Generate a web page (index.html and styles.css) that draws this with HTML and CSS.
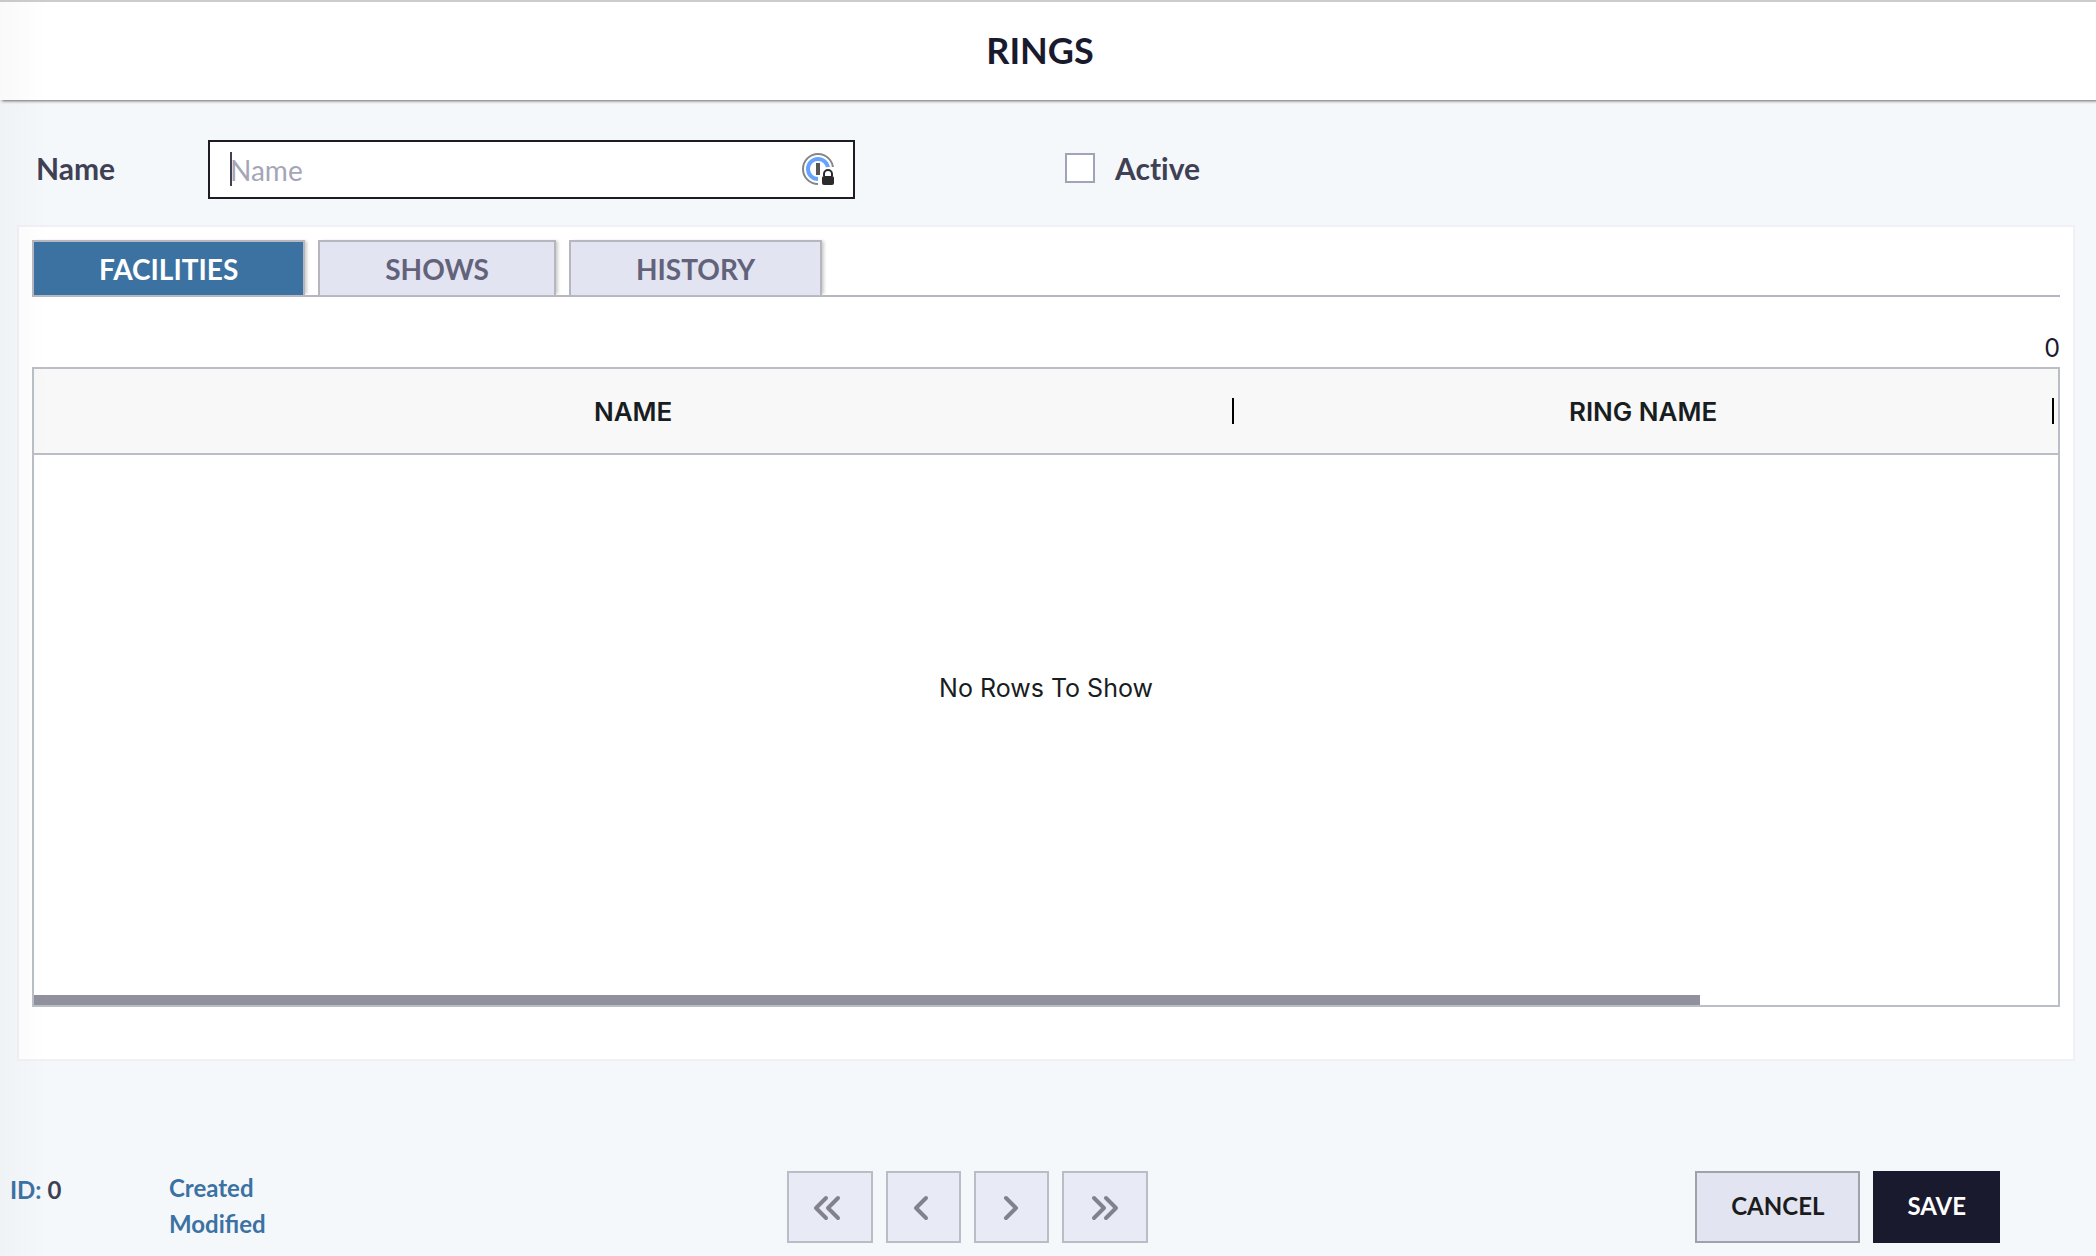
FILE: index.html
```html
<!DOCTYPE html>
<html lang="en">
<head>
<meta charset="utf-8">
<meta name="viewport" content="width=device-width, initial-scale=1">
<title>Rings</title>
<link rel="stylesheet" href="styles.css">
</head>
<body>
<div class="page">
  <header class="page-header">
    <h1 class="page-title">RINGS</h1>
  </header>

  <form class="ring-form">
    <label class="field-label" for="ring-name">Name</label>
    <div class="text-field">
      <input class="text-input" id="ring-name" type="text" placeholder="Name">
      <span class="caret"></span>
      <svg class="vault-icon" width="34" height="34" viewBox="0 0 34 34" aria-hidden="true">
        <circle cx="16" cy="17" r="15" fill="none" stroke="#858585" stroke-width="2"/>
        <circle cx="16" cy="17" r="10" fill="none" stroke="#66a3ff" stroke-width="4"/>
        <path d="M14 11h4v12h-4z" fill="#555"/>
        <path d="M16 23h3c0-5 3-8 7-8h8v19H16z" fill="#fff"/>
        <path d="M22 24v-2a4 4 0 0 1 8 0v2" fill="none" stroke="#2b2b2b" stroke-width="2"/>
        <rect x="20" y="24" width="12" height="9" rx="2" fill="#2b2b2b"/>
      </svg>
    </div>
    <div class="check-field">
      <input class="check-input" id="ring-active" type="checkbox">
      <label class="field-label" for="ring-active">Active</label>
    </div>
  </form>

  <main class="card">
    <div class="tabs" role="tablist">
      <button class="tab tab-active" type="button" role="tab" aria-selected="true">FACILITIES</button>
      <button class="tab" type="button" role="tab" aria-selected="false">SHOWS</button>
      <button class="tab" type="button" role="tab" aria-selected="false">HISTORY</button>
    </div>
    <div class="row-count">0</div>
    <div class="grid-box">
      <table class="grid-table">
        <thead>
          <tr>
            <th class="col-name"><span class="col-head">NAME</span></th>
            <th class="col-ring"><span class="col-head">RING NAME</span></th>
            <td class="col-rest"></td>
          </tr>
        </thead>
      </table>
      <div class="grid-empty">No Rows To Show</div>
      <div class="grid-scroll"><div class="grid-thumb"></div></div>
    </div>
  </main>

  <footer class="page-footer">
    <div class="record-info">
      <div class="record-id"><span class="info-label">ID:</span> 0</div>
      <div class="record-dates">
        <div class="info-label">Created</div>
        <div class="info-label">Modified</div>
      </div>
    </div>
    <nav class="pager" aria-label="Records">
      <button class="pager-button pager-wide pager-back" type="button" aria-label="First">
        <svg width="28" height="26" viewBox="0 0 28 26"><path d="M13 3 3 13l10 10M25 3 15 13l10 10"/></svg>
      </button>
      <button class="pager-button pager-back" type="button" aria-label="Previous">
        <svg width="16" height="26" viewBox="0 0 16 26"><path d="M13 3 3 13l10 10"/></svg>
      </button>
      <button class="pager-button" type="button" aria-label="Next">
        <svg width="16" height="26" viewBox="0 0 16 26"><path d="M3 3l10 10L3 23"/></svg>
      </button>
      <button class="pager-button pager-wide" type="button" aria-label="Last">
        <svg width="28" height="26" viewBox="0 0 28 26"><path d="M3 3l10 10L3 23M15 3l10 10-10 10"/></svg>
      </button>
    </nav>
    <div class="actions">
      <button class="action action-cancel" type="button">CANCEL</button>
      <button class="action action-save" type="button">SAVE</button>
    </div>
  </footer>
</div>
</body>
</html>
```
FILE: styles.css
```css
* {
  box-sizing: border-box;
}

body {
  margin: 0;
  background: #f4f8fb;
  color: #404055;
  font-family: Lato, "Liberation Sans", sans-serif;
}

button,
input {
  margin: 0;
  font-family: inherit;
}

.page {
  position: relative;
  display: flex;
  flex-direction: column;
  min-height: 100vh;
}

/* soft shade along the left edge of the drawer */
.page::after {
  content: "";
  position: absolute;
  inset: 0 auto 0 0;
  width: 48px;
  background: linear-gradient(to right, rgba(60, 0, 30, 0.025), rgba(60, 0, 30, 0));
  pointer-events: none;
}

.page-header {
  display: flex;
  align-items: center;
  justify-content: center;
  height: 100px;
  padding: 0 16px 2px 0;
  border-top: 2px solid #ccc;
  background: #fff;
  box-shadow: 2px 1px 3px #666;
}

.page-title {
  margin: 0;
  color: #1a1a2e;
  font-size: 36px;
  line-height: 44px;
  font-weight: 700;
}

.ring-form {
  display: grid;
  grid-template-columns: 172px 647fr 1241fr;
  align-items: center;
  padding: 40px 0 26px 36px;
}

.field-label {
  padding-bottom: 3px;
  color: #404055;
  font-size: 30px;
  line-height: 36px;
  font-weight: 700;
  font-variant-ligatures: none;
}

.text-field {
  position: relative;
}

.text-input {
  display: block;
  width: 100%;
  height: 59px;
  padding: 0 64px 0 20px;
  border: 2px solid #1c1c22;
  border-radius: 0;
  background: #fff;
  color: #404055;
  font-size: 28px;
  outline: none;
}

.text-input::placeholder {
  color: #a5a5b8;
  opacity: 1;
}

.caret {
  position: absolute;
  top: 12px;
  left: 22px;
  width: 2px;
  height: 34px;
  background: #404055;
}

.vault-icon {
  position: absolute;
  top: 12px;
  right: 19px;
}

.check-field {
  display: flex;
  align-items: center;
  gap: 20px;
  padding-left: 210px;
}

.check-input {
  width: 30px;
  height: 30px;
  margin-bottom: 3px;
  border: 2px solid #a3a3b8;
  background: #fff;
  appearance: none;
}

.card {
  flex: 1;
  display: flex;
  flex-direction: column;
  margin: 0 21px 0 17px;
  padding: 13px 13px 52px;
  border: 2px solid #f0f1f6;
  background: #fff;
}

.tabs {
  display: flex;
  gap: 13px;
  border-bottom: 2px solid #b6b6be;
}

.tab {
  height: 55px;
  padding: 0 65px;
  border: 2px solid #b6b6be;
  border-bottom: 0;
  background: #e2e4f1;
  box-shadow: 3px 0 3px -1px #ccc;
  color: #62627a;
  font-size: 28px;
  font-weight: 700;
}

.tab-active {
  background: #3c72a2;
  color: #fff;
}

.row-count {
  padding: 35px 0 3px;
  color: #1a1a2e;
  font-family: Inter, sans-serif;
  font-size: 25px;
  line-height: 32px;
  text-align: right;
}

.grid-box {
  position: relative;
  flex: 1;
  display: flex;
  flex-direction: column;
  border: 2px solid #babfc7;
  color: #181d1f;
  font-family: Inter, sans-serif;
}

.grid-table {
  width: 100%;
  border-collapse: separate;
  border-spacing: 0;
  table-layout: fixed;
  background: #f8f8f8;
}

.grid-table th,
.grid-table td {
  height: 86px;
  padding: 0;
  border-bottom: 2px solid #babfc7;
}

.col-name {
  width: 59.3%;
}

.col-ring {
  width: 40.5%;
}

.col-head {
  display: block;
  height: 26px;
  border-right: 2px solid #000;
  font-size: 26px;
  line-height: 28px;
  font-weight: 600;
}

.grid-empty {
  position: absolute;
  inset: 0;
  display: flex;
  align-items: center;
  justify-content: center;
  padding-top: 2px;
  font-size: 25px;
}

.grid-scroll {
  margin-top: auto;
}

.grid-thumb {
  width: 82.3%;
  height: 10px;
  background: #91919e;
}

.page-footer {
  display: grid;
  grid-template-columns: 776fr auto 851fr;
  align-items: center;
  padding: 109px 96px 12px 10px;
}

.record-info {
  display: flex;
  padding-bottom: 2px;
  font-size: 24px;
  line-height: 36px;
  font-weight: 700;
}

.record-id {
  width: 159px;
  line-height: 40px;
}

.info-label {
  color: #3c72a2;
}

.pager {
  display: flex;
  gap: 13px;
}

.pager-button {
  display: flex;
  align-items: center;
  justify-content: center;
  width: 75px;
  height: 72px;
  padding: 2px 0 0;
  border: 2px solid #babdc6;
  background: #e8ebf5;
}

.pager-wide {
  width: 86px;
}

.pager-back {
  padding-right: 5px;
}

.pager-button path {
  fill: none;
  stroke: #82828f;
  stroke-width: 4;
  stroke-linecap: round;
  stroke-linejoin: round;
}

.actions {
  display: flex;
  justify-content: flex-end;
  gap: 13px;
}

.action {
  height: 72px;
  padding: 0 34px 3px;
  border: 2px solid #1a1a2e;
  font-size: 24px;
  font-weight: 700;
}

.action-cancel {
  border-color: #9fa3a9;
  background: #e2e4f1;
  color: #1c1c1c;
}

.action-save {
  padding: 0 32px 3px;
  background: #1a1a2e;
  color: #fff;
}
```
